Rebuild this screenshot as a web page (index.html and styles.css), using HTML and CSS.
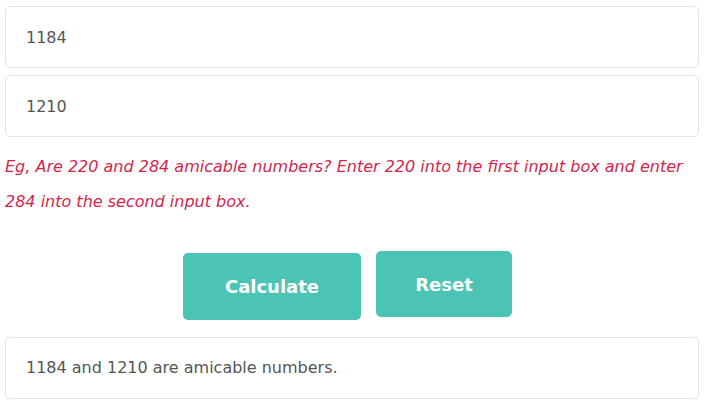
FILE: index.html
```
<!DOCTYPE html>
<html lang="en">
<head>
	<meta charset="UTF-8"/>
	<title>Amicable Numbers Calculator</title>
	<link rel="stylesheet" href="styles.css">
</head>
<body>
<div class="calc">
	<input class="calc_input" type="text" value="1184"/>
	<input class="calc_input" type="text" value="1210"/>
	<p class="calc_hint">Eg, Are 220 and 284 amicable numbers? Enter 220 into the first input box and enter 284 into the second input box.</p>
	<div class="calc_btns">
		<button class="btn btn_calc" type="button">Calculate</button>
		<button class="btn btn_reset" type="button">Reset</button>
	</div>
	<div class="calc_result">1184 and 1210 are amicable numbers.</div>
</div>
</body>
</html>
```

FILE: styles.css
```
*{margin:0;padding:0;box-sizing:border-box;}
body{font:16px/1.5 "DejaVu Sans",sans-serif;background:#fff;color:#555;}
.calc{width:694px;margin:6px 0 0 5px;}
.calc_input{display:block;width:100%;height:62px;padding:0 20px;border:1px solid #e3e3e3;border-radius:5px;font:16px "DejaVu Sans",sans-serif;color:#555;background:#fff;outline:none;}
.calc_input + .calc_input{margin-top:7px;}
.calc_hint{margin-top:12px;font-style:italic;font-size:16px;line-height:35px;color:#d3254c;}
.calc_btns{display:flex;justify-content:center;align-items:flex-start;gap:15px;margin-top:32px;padding-right:9px;}
.btn{border:0;border-radius:5px;background:#4bc4b5;color:#fff;font:bold 18px "DejaVu Sans",sans-serif;cursor:pointer;}
.btn_calc{width:178px;height:67px;margin-top:2px;}
.btn_reset{width:136px;height:66px;}
.calc_result{margin-top:17px;height:62px;padding:0 20px;border:1px solid #e3e3e3;border-radius:5px;line-height:60px;}
```
